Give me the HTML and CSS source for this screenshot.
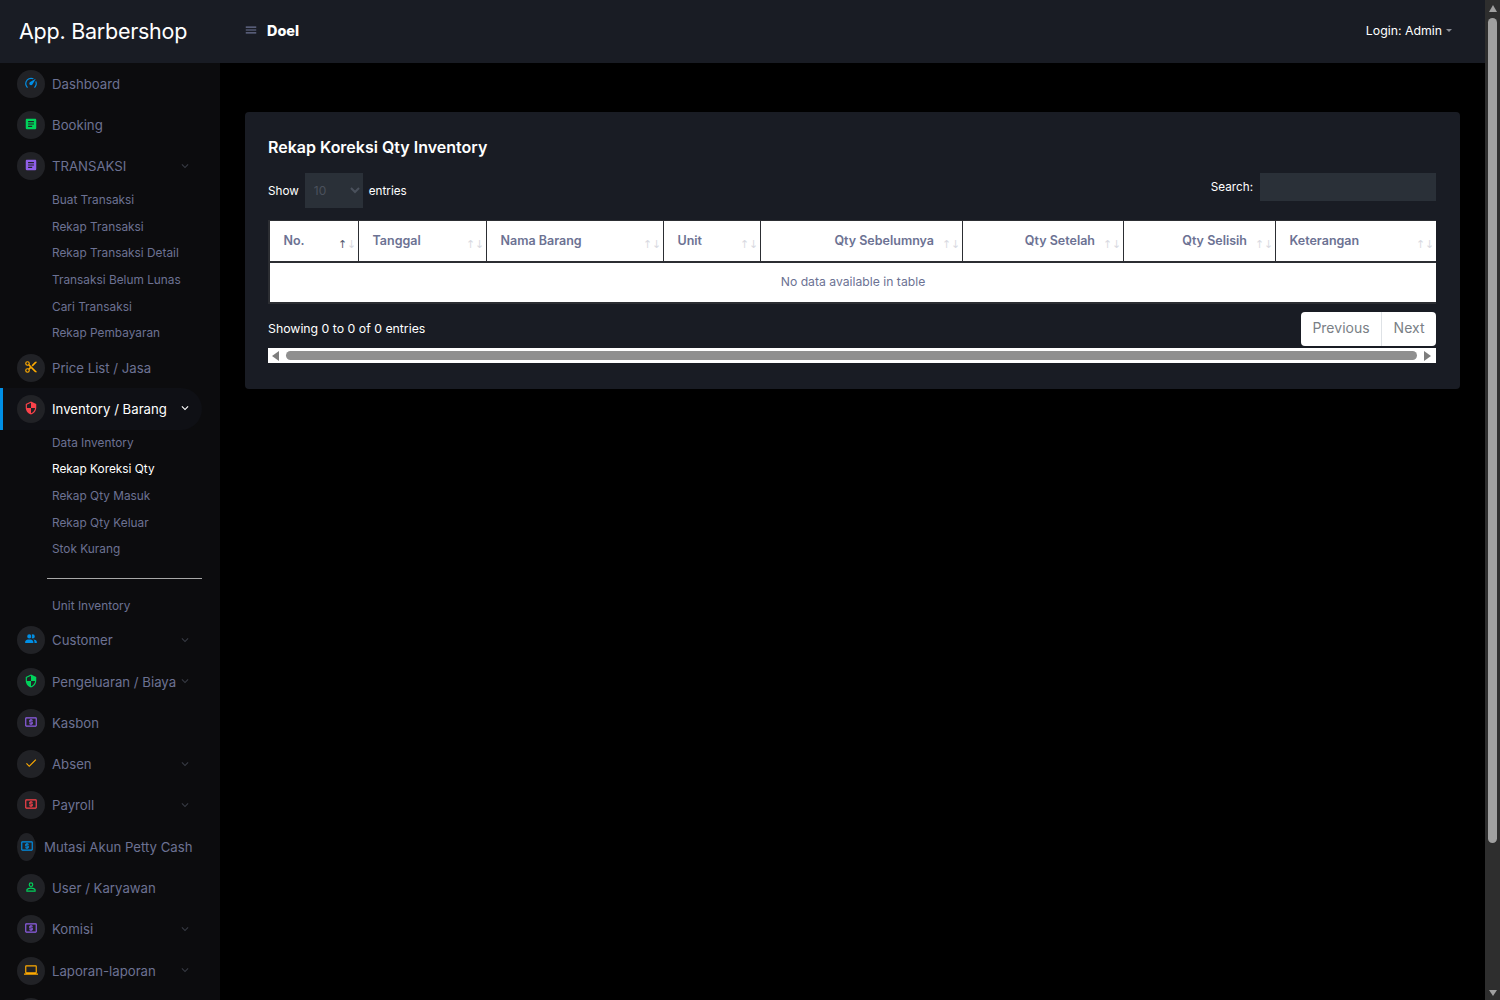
FILE: index.html
```html
<!DOCTYPE html>
<html lang="id">
<head>
<meta charset="utf-8">
<title>App. Barbershop</title>
<link rel="stylesheet" href="styles.css">
</head>
<body>
<svg class="defs" aria-hidden="true">
  <symbol id="i-speed" viewBox="0 0 24 24"><path d="M12,16A3,3 0 0,1 9,13C9,11.88 9.61,10.9 10.5,10.39L20.21,4.77L14.68,14.35C14.18,15.33 13.17,16 12,16M12,3C13.81,3 15.5,3.5 16.97,4.32L14.87,5.53C14,5.19 13,5 12,5A8,8 0 0,0 4,13C4,15.21 4.89,17.21 6.34,18.65H6.35C6.74,19.04 6.74,19.67 6.35,20.06C5.96,20.45 5.32,20.45 4.93,20.07C3.12,18.26 2,15.76 2,13A10,10 0 0,1 12,3M22,13C22,15.76 20.88,18.26 19.07,20.07C18.68,20.45 18.05,20.45 17.66,20.06C17.27,19.67 17.27,19.04 17.66,18.65C19.11,17.2 20,15.21 20,13C20,12 19.81,11 19.46,10.1L20.68,8C21.5,9.5 22,11.18 22,13Z"/></symbol>
  <symbol id="i-doc" viewBox="0 0 24 24"><path d="M14,17H7V15H14M17,13H7V11H17M17,9H7V7H17M19,3H5C3.89,3 3,3.89 3,5V19A2,2 0 0,0 5,21H19A2,2 0 0,0 21,19V5C21,3.89 20.1,3 19,3Z"/></symbol>
  <symbol id="i-cut" viewBox="0 0 24 24"><path d="M19,3L13,9L15,11L22,4V3M12,12.5A0.5,0.5 0 0,1 11.5,12A0.5,0.5 0 0,1 12,11.5A0.5,0.5 0 0,1 12.5,12A0.5,0.5 0 0,1 12,12.5M6,20A2,2 0 0,1 4,18C4,16.89 4.9,16 6,16A2,2 0 0,1 8,18C8,19.11 7.1,20 6,20M6,8A2,2 0 0,1 4,6C4,4.89 4.9,4 6,4A2,2 0 0,1 8,6C8,7.11 7.1,8 6,8M9.64,7.64C9.87,7.14 10,6.59 10,6A4,4 0 0,0 6,2A4,4 0 0,0 2,6A4,4 0 0,0 6,10C6.59,10 7.14,9.87 7.64,9.64L10,12L7.64,14.36C7.14,14.13 6.59,14 6,14A4,4 0 0,0 2,18A4,4 0 0,0 6,22A4,4 0 0,0 10,18C10,17.41 9.87,16.86 9.64,16.36L12,14L19,21H22V20L9.64,7.64Z"/></symbol>
  <symbol id="i-shield" viewBox="0 0 24 24"><path d="M12,12H19C18.47,16.12 15.72,19.78 12,20.92V12H5V6.3L12,3.19M12,1L3,5V11C3,16.55 6.84,21.73 12,23C17.16,21.73 21,16.55 21,11V5L12,1Z"/></symbol>
  <symbol id="i-people" viewBox="0 0 24 24"><path d="M16 17V19H2V17S2 13 9 13 16 17 16 17M12.5 7.5A3.5 3.5 0 1 0 9 11A3.5 3.5 0 0 0 12.5 7.5M15.94 13A5.32 5.32 0 0 1 18 17V19H22V17S22 13.37 15.94 13M15 4A3.39 3.39 0 0 0 13.07 4.59A5 5 0 0 1 13.07 10.41A3.39 3.39 0 0 0 15 11A3.5 3.5 0 0 0 15 4Z"/></symbol>
  <symbol id="i-cash" viewBox="0 0 24 24"><path d="M20 18H4V6H20M20 4H4C2.89 4 2 4.89 2 6V18C2 19.11 2.89 20 4 20H20C21.11 20 22 19.11 22 18V6C22 4.89 21.11 4 20 4M11 17H13V16H14C14.55 16 15 15.55 15 15V12C15 11.45 14.55 11 14 11H11V10H15V8H13V7H11V8H10C9.45 8 9 8.45 9 9V12C9 12.55 9.45 13 10 13H13V14H9V16H11V17Z"/></symbol>
  <symbol id="i-check" viewBox="0 0 24 24"><path d="M21,7L9,19L3.5,13.5L4.91,12.09L9,16.17L19.59,5.59L21,7Z"/></symbol>
  <symbol id="i-user" viewBox="0 0 24 24"><path d="M12,4A4,4 0 0,1 16,8A4,4 0 0,1 12,12A4,4 0 0,1 8,8A4,4 0 0,1 12,4M12,6A2,2 0 0,0 10,8A2,2 0 0,0 12,10A2,2 0 0,0 14,8A2,2 0 0,0 12,6M12,13C14.67,13 20,14.33 20,17V20H4V17C4,14.33 9.33,13 12,13M12,14.9C9.03,14.9 5.9,16.36 5.9,17V18.1H18.1V17C18.1,16.36 14.97,14.9 12,14.9Z"/></symbol>
  <symbol id="i-laptop" viewBox="0 0 24 24"><path d="M4,6H20V16H4M20,18A2,2 0 0,0 22,16V6C22,4.89 21.1,4 20,4H4C2.89,4 2,4.89 2,6V16A2,2 0 0,0 4,18H0V20H24V18H20Z"/></symbol>
  <symbol id="i-menu" viewBox="0 0 24 24"><path d="M3,6H21V8H3V6M3,11H21V13H3V11M3,16H21V18H3V16Z"/></symbol>
  <symbol id="i-chev" viewBox="0 0 24 24"><path d="M7.41,8.58L12,13.17L16.59,8.58L18,10L12,16L6,10L7.41,8.58Z"/></symbol>
</svg>

<div class="page">
<header class="topbar">
  <div class="brand">App. Barbershop</div>
  <svg class="burger"><use href="#i-menu"/></svg>
  <div class="shop">Doel</div>
  <div class="login">Login: Admin<span class="caret"></span></div>
</header>

<div class="layout">
  <nav class="sidebar">
    <a class="row"><span class="ico blue"><svg><use href="#i-speed"/></svg></span><span class="label">Dashboard</span></a>
    <a class="row"><span class="ico green"><svg><use href="#i-doc"/></svg></span><span class="label">Booking</span></a>
    <a class="row"><span class="ico purple"><svg><use href="#i-doc"/></svg></span><span class="label">TRANSAKSI</span><svg class="chev"><use href="#i-chev"/></svg></a>
    <ul class="sub">
      <li>Buat Transaksi</li>
      <li>Rekap Transaksi</li>
      <li>Rekap Transaksi Detail</li>
      <li>Transaksi Belum Lunas</li>
      <li>Cari Transaksi</li>
      <li>Rekap Pembayaran</li>
    </ul>
    <a class="row"><span class="ico orange"><svg><use href="#i-cut"/></svg></span><span class="label">Price List / Jasa</span></a>
    <a class="row active"><span class="ico red"><svg><use href="#i-shield"/></svg></span><span class="label">Inventory / Barang</span><svg class="chev"><use href="#i-chev"/></svg></a>
    <ul class="sub">
      <li>Data Inventory</li>
      <li class="current">Rekap Koreksi Qty</li>
      <li>Rekap Qty Masuk</li>
      <li>Rekap Qty Keluar</li>
      <li>Stok Kurang</li>
    </ul>
    <hr class="rule">
    <ul class="sub">
      <li>Unit Inventory</li>
    </ul>
    <a class="row"><span class="ico blue"><svg><use href="#i-people"/></svg></span><span class="label">Customer</span><svg class="chev"><use href="#i-chev"/></svg></a>
    <a class="row"><span class="ico green"><svg><use href="#i-shield"/></svg></span><span class="label">Pengeluaran / Biaya</span><svg class="chev"><use href="#i-chev"/></svg></a>
    <a class="row"><span class="ico purple"><svg><use href="#i-cash"/></svg></span><span class="label">Kasbon</span></a>
    <a class="row"><span class="ico orange"><svg><use href="#i-check"/></svg></span><span class="label">Absen</span><svg class="chev"><use href="#i-chev"/></svg></a>
    <a class="row"><span class="ico red"><svg><use href="#i-cash"/></svg></span><span class="label">Payroll</span><svg class="chev"><use href="#i-chev"/></svg></a>
    <a class="row"><span class="ico blue squeezed"><svg><use href="#i-cash"/></svg></span><span class="label">Mutasi Akun Petty Cash</span></a>
    <a class="row"><span class="ico green"><svg><use href="#i-user"/></svg></span><span class="label">User / Karyawan</span></a>
    <a class="row"><span class="ico purple"><svg><use href="#i-cash"/></svg></span><span class="label">Komisi</span><svg class="chev"><use href="#i-chev"/></svg></a>
    <a class="row"><span class="ico orange"><svg><use href="#i-laptop"/></svg></span><span class="label">Laporan-laporan</span><svg class="chev"><use href="#i-chev"/></svg></a>
    <a class="row"><span class="ico"></span></a>
  </nav>

  <main class="main">
    <section class="card">
      <h1 class="title">Rekap Koreksi Qty Inventory</h1>
      <div class="controls">
        <label class="length">Show <select class="pick" disabled><option>10</option></select> entries</label>
        <label class="search">Search: <input class="find" type="search"></label>
      </div>
      <div class="table-wrap">
        <table class="grid">
          <thead>
            <tr>
              <th class="c1">No.<span class="sort on"><i>↑</i><i>↓</i></span></th>
              <th class="c2">Tanggal<span class="sort"><i>↑</i><i>↓</i></span></th>
              <th class="c3">Nama Barang<span class="sort"><i>↑</i><i>↓</i></span></th>
              <th class="c4">Unit<span class="sort"><i>↑</i><i>↓</i></span></th>
              <th class="c5 num">Qty Sebelumnya<span class="sort"><i>↑</i><i>↓</i></span></th>
              <th class="c6 num">Qty Setelah<span class="sort"><i>↑</i><i>↓</i></span></th>
              <th class="c7 num">Qty Selisih<span class="sort"><i>↑</i><i>↓</i></span></th>
              <th class="c8">Keterangan<span class="sort"><i>↑</i><i>↓</i></span></th>
            </tr>
          </thead>
          <tbody>
            <tr><td colspan="8">No data available in table</td></tr>
          </tbody>
        </table>
      </div>
      <div class="foot">
        <div class="info">Showing 0 to 0 of 0 entries</div>
        <div class="pager"><a class="pg">Previous</a><a class="pg">Next</a></div>
      </div>
      <div class="hbar">
        <span class="tri left"></span>
        <span class="thumb"></span>
        <span class="tri right"></span>
      </div>
    </section>
  </main>
</div>
</div>

<div class="vbar" aria-hidden="true">
  <span class="vtri up"></span>
  <span class="vthumb"></span>
  <span class="vtri down"></span>
</div>
</body>
</html>
```
FILE: styles.css
```css
html {
  overflow: hidden;
}
body {
  display: flex;
  height: 100vh;
  margin: 0;
  overflow: hidden;
  background: #000;
  color: #fff;
  font-family: Inter, Roboto, "Liberation Sans", sans-serif;
  font-size: 13px;
}
.defs {
  display: none;
}
.page {
  flex: 1;
  min-width: 0;
  overflow: hidden;
}

/* window scrollbar */
.vbar {
  flex: 0 0 15px;
  display: flex;
  flex-direction: column;
  align-items: center;
  background: #2e2e2e;
}
.vtri {
  width: 0;
  height: 0;
  border-style: solid;
  border-color: transparent;
}
.vtri.up {
  margin-top: 5px;
  border-width: 0 4.5px 7px;
  border-bottom-color: #a0a0a0;
}
.vthumb {
  width: 9px;
  height: 825px;
  margin-top: 6px;
  border-radius: 5px;
  background: #a0a0a0;
}
.vtri.down {
  margin-top: auto;
  margin-bottom: 4px;
  border-width: 6px 4.5px 0;
  border-top-color: #a0a0a0;
}

/* top bar */
.topbar {
  display: flex;
  align-items: center;
  height: 63px;
  background: #191c24;
}
.brand {
  width: 220px;
  flex: none;
  box-sizing: border-box;
  padding-left: 19px;
  margin-top: -2px;
  font-size: 21.5px;
  letter-spacing: -0.25px;
  color: #fff;
}
.burger {
  width: 14px;
  height: 14px;
  margin-left: 24px;
  margin-top: -3px;
  fill: #6c7293;
}
.shop {
  margin-left: 9px;
  margin-top: -2px;
  font-size: 14.4px;
  font-weight: 800;
}
.login {
  margin-left: auto;
  margin-right: 33px;
  margin-top: -2px;
  font-size: 12.3px;
  display: flex;
  align-items: center;
}
.caret {
  width: 0;
  height: 0;
  margin-left: 4px;
  border-style: solid;
  border-width: 3.5px 3.5px 0;
  border-color: #8a8d96 transparent transparent;
}

/* layout */
.layout {
  display: flex;
  align-items: stretch;
}
.sidebar {
  width: 220px;
  flex: none;
  box-sizing: border-box;
  background: #0c0c0e;
  padding-bottom: 143px;
}
.main {
  flex: 1;
  min-width: 0;
  padding: 49px 25px 0;
}

/* sidebar rows */
.row {
  position: relative;
  display: flex;
  align-items: center;
  box-sizing: border-box;
  width: 202px;
  height: 41.33px;
  padding-left: 17px;
  color: #6c7293;
  font-size: 13.2px;
  white-space: nowrap;
  border-radius: 0 21px 21px 0;
}
.row.active {
  background: #0f1015;
  color: #fff;
  border-left: 3px solid #0090e7;
  padding-left: 14px;
}
.ico {
  flex: 0 0 28px;
  width: 28px;
  height: 28px;
  margin-right: 7px;
  border-radius: 50%;
  background: #212226;
  display: flex;
  align-items: center;
  justify-content: center;
  padding-bottom: 2px;
  box-sizing: border-box;
}
.ico svg {
  flex: none;
  width: 14px;
  height: 14px;
  fill: currentColor;
}
.ico.squeezed {
  flex: 0 0 19px;
  width: 19px;
  margin-right: 8px;
}
.blue { color: #0090e7; }
.green { color: #00d25b; }
.purple { color: #8f5fe8; }
.orange { color: #ffab00; }
.red { color: #fc424a; }
.chev {
  position: absolute;
  left: 178px;
  top: 13px;
  width: 14px;
  height: 14px;
  fill: #363942;
}
.row.active .chev {
  left: 175px;
  fill: #fff;
}
.sub {
  list-style: none;
  margin: 0;
  padding: 0 0 0 52px;
}
.sub li {
  height: 26.67px;
  line-height: 27.4px;
  font-size: 11.85px;
  color: #6c7293;
  white-space: nowrap;
}
.sub li.current {
  color: #fff;
}
.rule {
  width: 155px;
  height: 1px;
  margin: 15px 0 14px 47px;
  border: 0;
  background: #a8a8a8;
}

/* card */
.card {
  box-sizing: border-box;
  background: #191c24;
  border-radius: 4px;
  padding: 24px 24px 26px 23px;
}
.title {
  margin: 0 0 15px;
  font-size: 16px;
  line-height: 22px;
  font-weight: 600;
  color: #fff;
}
.controls {
  display: flex;
  justify-content: space-between;
  align-items: flex-start;
  font-size: 11.7px;
  margin-bottom: 12px;
}
.length {
  display: flex;
  align-items: center;
  gap: 6px;
  height: 35px;
}
.pick {
  width: 58px;
  height: 35px;
  padding-left: 5px;
  background: #2a3038;
  border: 0;
  color: #4a515c;
  font-size: 12px;
  font-family: inherit;
  opacity: 1;
}
.search {
  display: flex;
  align-items: center;
  gap: 7px;
  height: 28px;
  line-height: 26px;
}
.find {
  width: 176px;
  height: 28px;
  box-sizing: border-box;
  background: #2a3038;
  border: 0;
  padding: 0 8px;
}

/* table */
.table-wrap {
  overflow: hidden;
}
.grid {
  width: 1168px;
  table-layout: fixed;
  border-collapse: separate;
  border-spacing: 0;
  background: #fff;
}
.grid th {
  position: relative;
  box-sizing: border-box;
  height: 43px;
  padding: 0 14px 2px 13.5px;
  border-top: 1px solid #2c2e33;
  border-right: 1px solid #2c2e33;
  border-bottom: 2px solid #2c2e33;
  color: #6c7293;
  font-size: 12.5px;
  font-weight: 600;
  text-align: left;
}
.grid th.num {
  text-align: right;
  padding-right: 28px;
}
.grid th:first-child {
  border-left: 2px solid #2c2e33;
}
.grid th:last-child {
  border-right: 0;
}
.c1 { width: 91px; }
.c2 { width: 128px; }
.c3 { width: 177px; }
.c4 { width: 97px; }
.c5 { width: 202px; }
.c6 { width: 161px; }
.c7 { width: 152px; }
.c8 { width: 160px; }
.grid td {
  box-sizing: border-box;
  height: 41px;
  padding: 0 0 2px;
  text-align: center;
  color: #6c7293;
  font-size: 12.2px;
  border-left: 2px solid #2c2e33;
  border-bottom: 2px solid #2c2e33;
}
.sort {
  position: absolute;
  right: 2px;
  bottom: 10px;
  display: flex;
  font-family: "DejaVu Sans", sans-serif;
  font-size: 11px;
  font-weight: 400;
  line-height: 12px;
}
.sort i {
  font-style: normal;
  width: 9px;
  text-align: center;
  color: #d9dae2;
}
.sort.on i:first-child {
  color: #555a70;
}

/* footer */
.foot {
  display: flex;
  justify-content: space-between;
  align-items: center;
  margin-top: 8px;
}
.info {
  font-size: 12.3px;
  margin-bottom: 2px;
}
.pager {
  display: flex;
  height: 34px;
  background: #fff;
  border-radius: 4px;
  overflow: hidden;
}
.pg {
  display: flex;
  align-items: center;
  padding: 0 11.5px 3px;
  color: #7a7f86;
  font-size: 14px;
  border-left: 1px solid #dee2e6;
}
.pg:first-child {
  border-left: 0;
}
.hbar {
  display: flex;
  align-items: center;
  height: 15px;
  margin-top: 2px;
  background: #fff;
  padding: 0 3px;
}
.thumb {
  flex: 1;
  height: 9px;
  margin: 0 7px 0 7px;
  border-radius: 5px;
  background: #8f8f8f;
}
.tri {
  width: 0;
  height: 0;
  border-style: solid;
  border-color: transparent;
}
.tri.left {
  margin-left: 1px;
  border-width: 5px 7px 5px 0;
  border-right-color: #7d7d7d;
}
.tri.right {
  margin-right: 2px;
  border-width: 5px 0 5px 7px;
  border-left-color: #7d7d7d;
}
```
